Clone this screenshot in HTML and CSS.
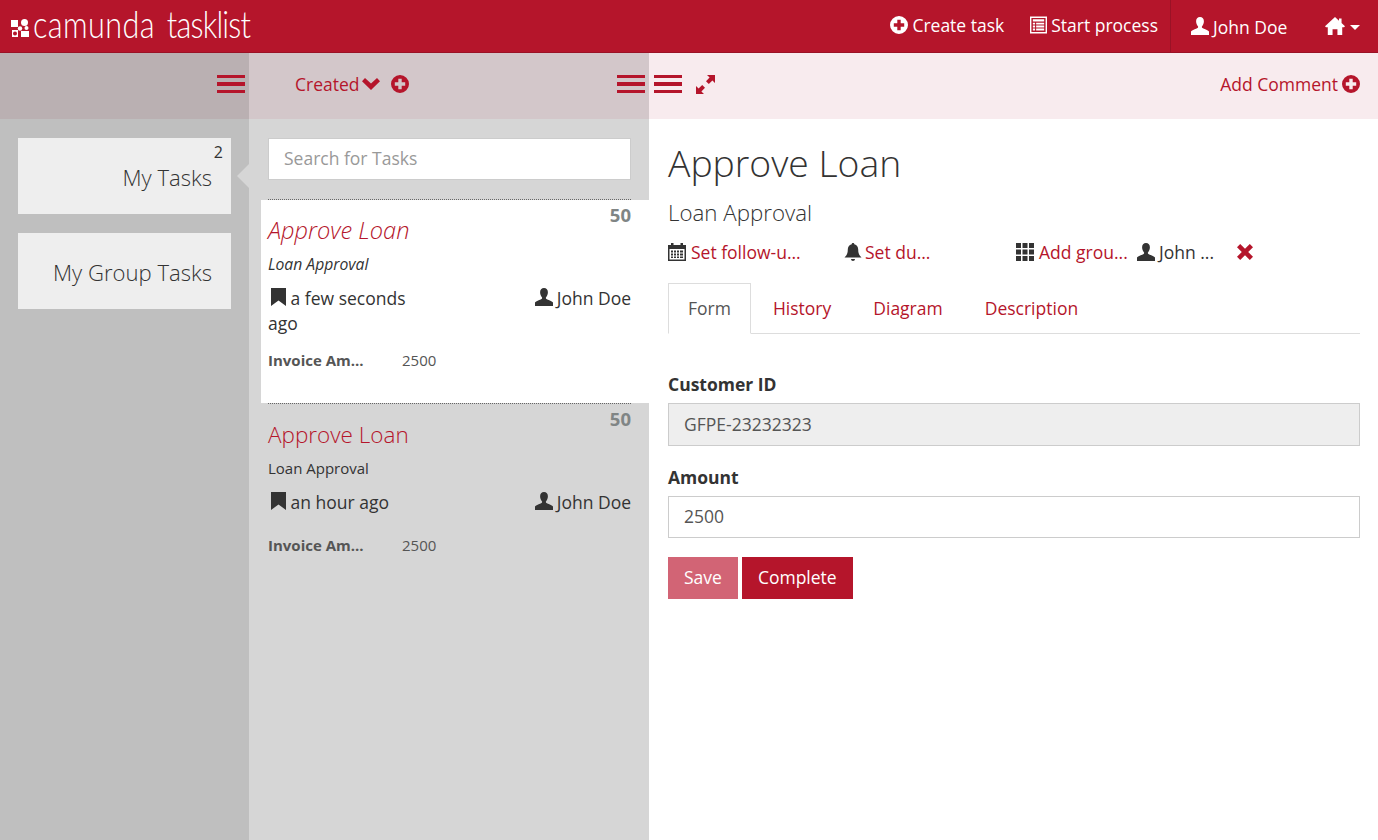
FILE: index.html
```html
<!DOCTYPE html>
<html>
<head>
<meta charset="utf-8">
<title>camunda tasklist</title>
<link rel="stylesheet" href="styles.css">
</head>
<body>
<svg class="defs" width="0" height="0">
	<symbol id="i-plus" viewBox="0 0 18 18"><path fill-rule="evenodd" d="M9 0a9 9 0 1 1 0 18A9 9 0 0 1 9 0zM7.300 3.800v3.500H3.800v3.400h3.500v3.500h3.400v-3.500h3.500V7.300h-3.500V3.800z"/></symbol>
	<symbol id="i-user" viewBox="0 0 18 18"><path d="M9 0c2.500 0 3.900 1.800 3.900 4.300 0 1.900-.8 3.700-1.800 4.900-.4.500-.3 1.400.3 1.800 1.300.8 5.600 1.900 6.600 3.500.3.600 0 3.500 0 3.500H0s-.3-2.900 0-3.500c1-1.600 5.300-2.700 6.600-3.500.6-.4.700-1.300.3-1.800C5.900 8 5.100 6.200 5.100 4.300 5.100 1.800 6.500 0 9 0z"/></symbol>
	<symbol id="i-list" viewBox="0 0 18 18"><path fill-rule="evenodd" d="M0 0h18v18H0zM1.500 1.500v15h15v-15zM3 3h12v2.200H3zM3 6.500h2.400v2H3zM6.500 6.500H15v2H6.500zM3 9.600h2.400v2H3zM6.500 9.600H15v2H6.500zM3 12.700h2.400v2H3zM6.500 12.700H15v2H6.500z"/></symbol>
	<symbol id="i-home" viewBox="0 0 18 18"><path d="M9 1l3.600 3.300V2.300h2.300v4.100L18 9.300l-.9.900H15.500V17h-4.300v-5H6.800v5H2.500v-6.800H.9L0 9.300z"/></symbol>
	<symbol id="i-heart-chevron" viewBox="0 0 18 12"><path d="M0 3.200L3 0l6 5.600L15 0l3 3.200L9 12z"/></symbol>
	<symbol id="i-expand" viewBox="0 0 19 19"><path d="M11 0h8v8l-2.600-2.600-3.600 3.600-2.800-2.800 3.600-3.600zM8 19H0v-8l2.600 2.600 3.600-3.600 2.800 2.800-3.600 3.600z"/></symbol>
	<symbol id="i-bookmark" viewBox="0 0 15 18"><path d="M0 0h15v18l-7.500-5.500L0 18z"/></symbol>
	<symbol id="i-calendar" viewBox="0 0 18 18"><path fill-rule="evenodd" d="M3 0h2.500v2h7V0H15v2h3v16H0V2h3zM1.500 6v10.500h15V6zM3 7.500h2v2H3zM6 7.500h2v2H6zM9 7.500h2v2H9zM12 7.500h3v2h-3zM3 10.500h2v2H3zM6 10.500h2v2H6zM9 10.500h2v2H9zM12 10.500h3v2h-3zM3 13.500h2V15H3zM6 13.500h2V15H6zM9 13.500h2V15H9zM12 13.500h3V15h-3z"/></symbol>
	<symbol id="i-bell" viewBox="0 0 18 18"><path d="M9 0c.8 0 1.300.5 1.300 1.200 2.700.6 3.900 2.800 3.900 5.300 0 3.500.8 5.900 3.300 8H.5c2.500-2.100 3.300-4.500 3.300-8 0-2.500 1.200-4.700 3.900-5.300C7.700.5 8.200 0 9 0zM7 16h4c0 1.200-.9 2-2 2s-2-.8-2-2z"/></symbol>
	<symbol id="i-grid" viewBox="0 0 18 18"><path d="M0 0h5v5H0zM6.500 0h5v5h-5zM13 0h5v5h-5zM0 6.500h5v5H0zM6.500 6.500h5v5h-5zM13 6.500h5v5h-5zM0 13h5v5H0zM6.500 13h5v5h-5zM13 13h5v5h-5z"/></symbol>
	<symbol id="i-remove" viewBox="0 0 16 16"><path d="M3.200 0L8 4.800 12.800 0 16 3.200 11.200 8 16 12.800 12.800 16 8 11.200 3.200 16 0 12.800 4.800 8 0 3.200z"/></symbol>
</svg>

<header class="navbar">
	<div class="brand">
		<svg class="brand-mark" width="18" height="18" viewBox="0 0 18 18"><path fill="#fff" d="M0 1h7v7H0zM1 11h6v7H1zM10 12h8v6h-8z"/><circle cx="13.500" cy="3.500" r="3.500" fill="#fff"/><circle cx="9" cy="9.500" r="2.200" fill="#fff"/><circle cx="15.500" cy="9" r="2" fill="#fff"/><circle cx="4" cy="14.500" r="2" fill="#b5152b"/></svg>
		<span class="brand-name">camunda <span class="brand-app">tasklist</span></span>
	</div>
	<nav class="nav-actions">
		<a class="nav-link"><svg class="ico ico-18"><use href="#i-plus"/></svg>Create task</a>
		<a class="nav-link"><svg class="ico ico-17"><use href="#i-list"/></svg>Start process</a>
	</nav>
	<div class="nav-user">
		<a class="nav-link user-link"><svg class="ico ico-18"><use href="#i-user"/></svg>John Doe</a>
		<a class="nav-link home-link"><svg class="ico ico-20"><use href="#i-home"/></svg><span class="caret"></span></a>
	</div>
</header>

<main class="columns">
	<aside class="col col-filters">
		<div class="toolbar toolbar-filters">
			<span class="burger"></span>
		</div>
		<div class="filters">
			<a class="filter filter-active"><span class="filter-count">2</span><span class="filter-name">My Tasks</span></a>
			<a class="filter"><span class="filter-name">My Group Tasks</span></a>
		</div>
	</aside>

	<section class="col col-list">
		<div class="toolbar toolbar-list">
			<span class="sort-label">Created</span>
			<svg class="ico sort-chevron"><use href="#i-heart-chevron"/></svg>
			<svg class="ico ico-18 sort-add"><use href="#i-plus"/></svg>
			<span class="burger"></span>
		</div>
		<div class="search-wrap">
			<input class="search" type="text" placeholder="Search for Tasks">
		</div>
		<ul class="tasks">
			<li class="task task-active">
				<span class="task-prio">50</span>
				<h3 class="task-name">Approve Loan</h3>
				<div class="task-process">Loan Approval</div>
				<div class="task-meta">
					<div class="task-time"><svg class="ico task-bookmark"><use href="#i-bookmark"/></svg> a few seconds ago</div>
					<div class="task-owner"><svg class="ico ico-18"><use href="#i-user"/></svg> John Doe</div>
				</div>
				<div class="task-vars"><b>Invoice Am...</b><span>2500</span></div>
			</li>
			<li class="task">
				<span class="task-prio">50</span>
				<h3 class="task-name">Approve Loan</h3>
				<div class="task-process">Loan Approval</div>
				<div class="task-meta">
					<div class="task-time"><svg class="ico task-bookmark"><use href="#i-bookmark"/></svg> an hour ago</div>
					<div class="task-owner"><svg class="ico ico-18"><use href="#i-user"/></svg> John Doe</div>
				</div>
				<div class="task-vars"><b>Invoice Am...</b><span>2500</span></div>
			</li>
		</ul>
	</section>

	<section class="col col-detail">
		<div class="toolbar toolbar-detail">
			<span class="burger"></span>
			<svg class="ico expand"><use href="#i-expand"/></svg>
			<a class="add-comment">Add Comment<svg class="ico ico-18"><use href="#i-plus"/></svg></a>
		</div>
		<div class="detail">
			<h1 class="detail-title">Approve Loan</h1>
			<h2 class="detail-process">Loan Approval</h2>
			<div class="detail-meta">
				<a class="meta-item meta-follow"><svg class="ico ico-18 dark"><use href="#i-calendar"/></svg>Set follow-u...</a>
				<a class="meta-item meta-due"><svg class="ico ico-18 dark"><use href="#i-bell"/></svg>Set du...</a>
				<a class="meta-item meta-group"><svg class="ico ico-18 dark"><use href="#i-grid"/></svg>Add grou...</a>
				<span class="meta-item meta-user"><svg class="ico ico-18 dark"><use href="#i-user"/></svg>John ...</span>
				<svg class="ico meta-remove"><use href="#i-remove"/></svg>
			</div>
			<ul class="tabs">
				<li class="tab tab-active">Form</li>
				<li class="tab">History</li>
				<li class="tab">Diagram</li>
				<li class="tab">Description</li>
			</ul>
			<form class="task-form">
				<label class="field-label">Customer ID</label>
				<input class="field field-readonly" type="text" value="GFPE-23232323" readonly>
				<label class="field-label">Amount</label>
				<input class="field" type="text" value="2500">
				<div class="form-buttons">
					<button class="btn btn-save" type="button">Save</button>
					<button class="btn btn-complete" type="button">Complete</button>
				</div>
			</form>
		</div>
	</section>
</main>
</body>
</html>
```

FILE: styles.css
```css
* {
	box-sizing: border-box;
}

html, body {
	height: 100%;
}

body, ul, li, h1, h2, h3 {
	padding: 0;
	margin: 0;
	border: 0;
}

body {
	display: flex;
	flex-direction: column;
	height: 840px;
	overflow: hidden;
	font-family: "Open Sans", sans-serif;
	font-size: 17.500px;
	color: #333;
	background: #fff;
}

ul {
	list-style: none;
}

.defs {
	position: absolute;
}

.ico {
	display: inline-block;
	flex: none;
	fill: currentColor;
}

.ico-17 {
	width: 17px;
	height: 18px;
}

.ico-18 {
	width: 18px;
	height: 18px;
}

.ico-20 {
	width: 20px;
	height: 20px;
}

.dark {
	color: #333;
}

/* top bar */
.navbar {
	display: flex;
	align-items: stretch;
	flex: none;
	height: 53px;
	background: #b5152b;
	border-bottom: 1px solid #9a1226;
	color: #fff;
}

.brand {
	display: flex;
	align-items: center;
	padding: 0 0 3px 11px;
	flex: 1;
}

.brand-mark {
	margin: 6px 4px 0 0;
}

.brand-name {
	font-family: Lato, sans-serif;
	font-weight: 300;
	font-size: 30px;
	letter-spacing: 0.4px;
	word-spacing: 3px;
	line-height: 1;
	transform: scale(1.02, 1.22);
	transform-origin: 0 70%;
}

.brand-app {
	letter-spacing: -0.8px;
}

.nav-actions {
	display: flex;
	align-items: center;
	gap: 26px;
	padding: 0 12px 2px 0;
}

.nav-link {
	display: flex;
	align-items: center;
	gap: 4px;
	white-space: nowrap;
}

.nav-user {
	display: flex;
	align-items: center;
	border-left: 1px solid #9a1226;
	padding: 2px 0 0 20px;
}

.user-link {
	width: 134px;
}

.user-link .ico {
	margin-top: -3px;
}

.home-link {
	gap: 5px;
	width: 53px;
}

.home-link .ico {
	margin-top: -3px;
}

.caret {
	width: 0;
	height: 0;
	border: 5px solid transparent;
	border-top-color: #fff;
	border-bottom: 0;
}

/* columns */
.columns {
	display: grid;
	grid-template-columns: 249px 400px 1fr;
	flex: 1;
	min-height: 0;
}

.col {
	min-width: 0;
}

.col-filters {
	background: #bfbfbf;
}

.col-list {
	background: #d6d6d6;
}

.toolbar {
	display: flex;
	align-items: center;
	height: 66px;
	padding-bottom: 4px;
	color: #b5152b;
}

.toolbar-filters {
	justify-content: flex-end;
	padding-right: 4px;
	background: #bab0b2;
}

.toolbar-list {
	padding-right: 4px;
	padding-left: 46px;
	background: #d3c7ca;
}

.toolbar-detail {
	padding-right: 18px;
	padding-left: 5px;
	background: #f8ebee;
}

.burger {
	display: block;
	width: 28px;
	height: 18px;
	border-top: 3px solid #b5152b;
	border-bottom: 3px solid #b5152b;
	background: linear-gradient(#b5152b, #b5152b) 0 50% / 100% 4px no-repeat;
}

/* filters */
.filters {
	display: flex;
	flex-direction: column;
	gap: 19px;
	padding: 19px 18px;
}

.filter {
	position: relative;
	display: block;
	height: 76px;
	padding: 23px 19px 0 0;
	background: #eee;
	text-align: right;
}

.filter-name {
	font-size: 22.100px;
	font-weight: 300;
	line-height: 32px;
	color: #333;
}

.filter-count {
	position: absolute;
	top: 3px;
	right: 8px;
	font-size: 16px;
	line-height: 22px;
}

.filter-active::after {
	content: "";
	position: absolute;
	right: -18px;
	top: 26px;
	border: 12px solid transparent;
	border-left: 0;
	border-right-color: #d6d6d6;
}

/* task list */
.sort-label {
	margin-right: 2px;
}

.sort-chevron {
	width: 18px;
	height: 12px;
}

.sort-add {
	margin-left: 11px;
	margin-right: auto;
}

.search-wrap {
	padding: 19px 18px 20px 19px;
}

.search {
	display: block;
	width: 100%;
	height: 42px;
	padding: 0 15px 2px;
	border: 1px solid #ccc;
	background: #fff;
	font-family: inherit;
	font-size: 17.500px;
	color: #333;
}

.search::placeholder {
	color: #999;
	opacity: 1;
}

.task {
	position: relative;
	padding: 0 18px 0 19px;
}

.task-active {
	height: 203px;
	margin-left: 12px;
	padding-left: 7px;
	background: #fff;
}

.task::before {
	content: "";
	position: absolute;
	right: 18px;
	left: 19px;
	top: 0;
	border-top: 1px dotted #666;
}

.task-active::before {
	left: 7px;
	top: -1px;
}

.task-prio {
	position: absolute;
	top: 5px;
	right: 18px;
	font-size: 18.500px;
	line-height: 22px;
	font-weight: 700;
	color: #808585;
}

.task-active .task-prio {
	top: 4px;
}

.task-name {
	padding-top: 16px;
	font-size: 22.500px;
	font-weight: 300;
	line-height: 32px;
	color: #b5152b;
}

.task-active .task-name {
	padding-top: 14px;
	font-size: 23.600px;
	font-style: italic;
}

.task-process {
	margin-top: 7px;
	font-size: 15px;
	line-height: 20px;
}

.task-active .task-process {
	margin-top: 8px;
	font-size: 15.700px;
	font-style: italic;
}

.task-meta {
	display: flex;
	justify-content: space-between;
	margin-top: 12px;
	line-height: 25px;
}

.task-time {
	width: 160px;
}

.task-bookmark {
	width: 15px;
	height: 18px;
	margin-left: 3px;
	vertical-align: -1px;
}

.task-owner {
	display: flex;
	align-items: flex-start;
	gap: 4px;
	white-space: nowrap;
}

.task-owner .ico {
	margin-top: 2px;
}

.task-vars {
	display: flex;
	margin-top: 19px;
	font-size: 15px;
	line-height: 22px;
	color: #555;
}

.task-active .task-vars {
	margin-top: 13px;
}

.task-vars b {
	width: 134px;
}

/* detail */
.toolbar-detail .expand {
	width: 19px;
	height: 19px;
	margin-left: 14px;
}

.add-comment {
	display: flex;
	align-items: center;
	gap: 4px;
	margin-left: auto;
}

.detail {
	padding: 19px 18px 0 19px;
}

.detail-title {
	font-size: 37.300px;
	font-weight: 300;
	line-height: 50px;
	color: #333;
}

.detail-process {
	margin-top: 10px;
	font-size: 22.300px;
	font-weight: 300;
	line-height: 30px;
}

.detail-meta {
	display: flex;
	align-items: center;
	height: 24px;
	margin-top: 12px;
	color: #b5152b;
	white-space: nowrap;
}

.meta-item {
	display: flex;
	align-items: center;
	gap: 5px;
}

.meta-follow {
	width: 176px;
}

.meta-due {
	gap: 3px;
	width: 172px;
}

.meta-group {
	width: 121px;
}

.meta-user {
	gap: 4px;
	width: 100px;
	color: #333;
}

.meta-remove {
	width: 16px;
	height: 16px;
}

.tabs {
	display: flex;
	gap: 2px;
	margin-top: 19px;
	height: 51px;
	border-bottom: 1px solid #ddd;
}

.tab {
	padding: 0 19px;
	height: 51px;
	line-height: 49px;
	border: 1px solid transparent;
	color: #b5152b;
}

.tab-active {
	border-color: #ddd #ddd #fff;
	background: #fff;
	color: #555;
}

.task-form {
	padding-top: 38px;
}

.field-label {
	display: block;
	margin-bottom: 6px;
	font-size: 17.500px;
	font-weight: 700;
	line-height: 25px;
	color: #333;
}

.field {
	display: block;
	width: 100%;
	height: 42px;
	margin-bottom: 20px;
	padding: 0 15px 2px;
	border: 1px solid #ccc;
	background: #fff;
	font-family: inherit;
	font-size: 17.500px;
	color: #555;
	outline: 0;
}

.field-readonly {
	height: 43px;
	margin-bottom: 19px;
	background: #eee;
}

.form-buttons {
	display: flex;
	gap: 4px;
	margin-top: -1px;
}

.btn {
	height: 42px;
	padding: 0 16px 2px;
	border: 0;
	font-family: inherit;
	font-size: 17.500px;
	color: #fff;
}

.btn-save {
	background: #d26475;
}

.btn-complete {
	background: #b5152b;
}
```
